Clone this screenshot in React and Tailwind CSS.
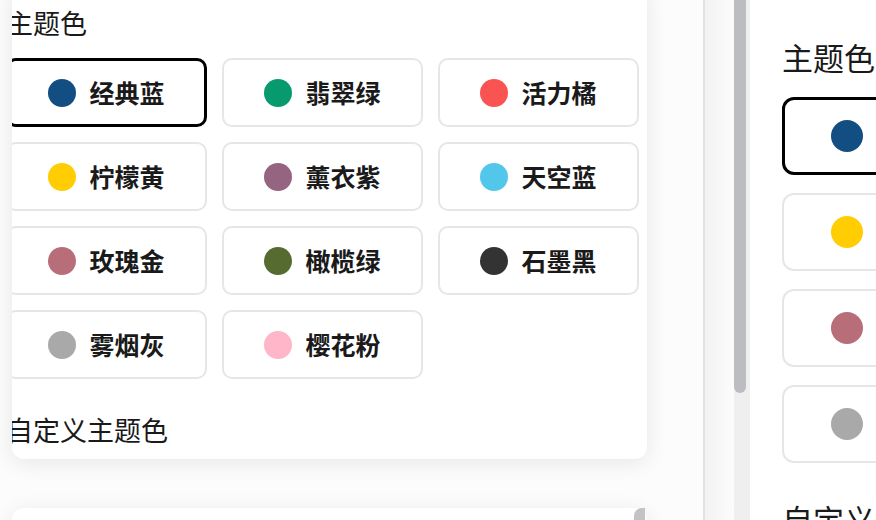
import React from "react";

const colors = [
  { name: "经典蓝", c: "#124e82", sel: true },
  { name: "翡翠绿", c: "#079a6f" },
  { name: "活力橘", c: "#fa5452" },
  { name: "柠檬黄", c: "#ffcd02" },
  { name: "薰衣紫", c: "#946481" },
  { name: "天空蓝", c: "#53c7ea" },
  { name: "玫瑰金", c: "#b76e79" },
  { name: "橄榄绿", c: "#556b2f" },
  { name: "石墨黑", c: "#333333" },
  { name: "雾烟灰", c: "#a9a9a9" },
  { name: "樱花粉", c: "#ffb6c8" },
];

const font = { fontFamily: '"Noto Sans CJK SC", "Noto Sans", sans-serif' };

function SmallBtn({ item }) {
  return (
    <div
      className={
        item.sel
          ? "h-[69px] rounded-[10px] border-[3px] border-black bg-white flex items-center justify-center gap-[13px]"
          : "h-[69px] rounded-[10px] border-2 border-[#e6e6e6] bg-white flex items-center justify-center gap-[13px]"
      }
    >
      <span className="w-[28px] h-[28px] rounded-full shrink-0" style={{ backgroundColor: item.c }} />
      <span className="text-[25px] leading-none font-bold text-[#1a1a1a] whitespace-nowrap">{item.name}</span>
    </div>
  );
}

function BigBtn({ item }) {
  return (
    <div
      className={
        item.sel
          ? "h-[78px] rounded-[12px] border-[3px] border-black bg-white flex items-center justify-center gap-[15px]"
          : "h-[78px] rounded-[12px] border-2 border-[#e6e6e6] bg-white flex items-center justify-center gap-[15px]"
      }
    >
      <span className="w-[32px] h-[32px] rounded-full shrink-0" style={{ backgroundColor: item.c }} />
      <span className="text-[28px] leading-none font-bold text-[#1a1a1a] whitespace-nowrap">{item.name}</span>
    </div>
  );
}

export default function App() {
  return (
    <div className="w-[876px] h-[520px] overflow-hidden flex bg-white" style={font}>
      {/* left pane */}
      <div className="w-[703px] h-full shrink-0 bg-[#fcfcfc] overflow-hidden flex flex-col pl-[12px]">
        <div className="w-[635px] shrink-0 -mt-[16px] pt-[23px] pb-[13px] bg-white rounded-[12px] overflow-hidden shadow-[0_4px_22px_rgba(0,0,0,0.09)]">
          <div className="-ml-[6px]">
            <div className="text-[27px] leading-[32px] text-[#1a1a1a]">主题色</div>
            <div className="mt-[19px] grid grid-cols-[201px_201px_201px] gap-x-[15px] gap-y-[15px]">
              {colors.map((it) => (
                <SmallBtn key={it.name} item={it} />
              ))}
            </div>
            <div className="mt-[35px] text-[27px] leading-[32px] text-[#1a1a1a]">自定义主题色</div>
          </div>
        </div>
        <div className="w-[635px] mt-[49px] h-[60px] shrink-0 bg-white rounded-[12px] shadow-[0_4px_22px_rgba(0,0,0,0.09)] flex justify-end">
          <div className="w-[11px] h-full mr-[2px] bg-[#c2c3c7] rounded-tl-[8px]" />
        </div>
      </div>
      {/* gutter + scrollbar */}
      <div className="w-[47px] h-full shrink-0 flex border-l-2 border-[#e2e2e2]">
        <div className="w-[29px] h-full bg-gradient-to-r from-[#f2f2f2] to-[#fcfcfc]" />
        <div className="w-[16px] h-full bg-[#efeff0] flex flex-col">
          <div className="w-[12px] h-[393px] shrink-0 bg-[#bcbdc1] rounded-b-full" />
        </div>
      </div>
      {/* right pane */}
      <div className="flex-1 h-full bg-white overflow-hidden pl-[32px] pt-[37px]">
        <div className="w-[720px]">
          <div className="text-[31px] leading-[40px] text-[#1a1a1a]">主题色</div>
          <div className="mt-[20px] grid grid-cols-[229px_229px_229px] gap-x-[17px] gap-y-[18px]">
            {colors.map((it) => (
              <BigBtn key={it.name} item={it} />
            ))}
          </div>
          <div className="mt-[36px] text-[31px] leading-[40px] text-[#1a1a1a]">自定义主题色</div>
        </div>
      </div>
    </div>
  );
}
